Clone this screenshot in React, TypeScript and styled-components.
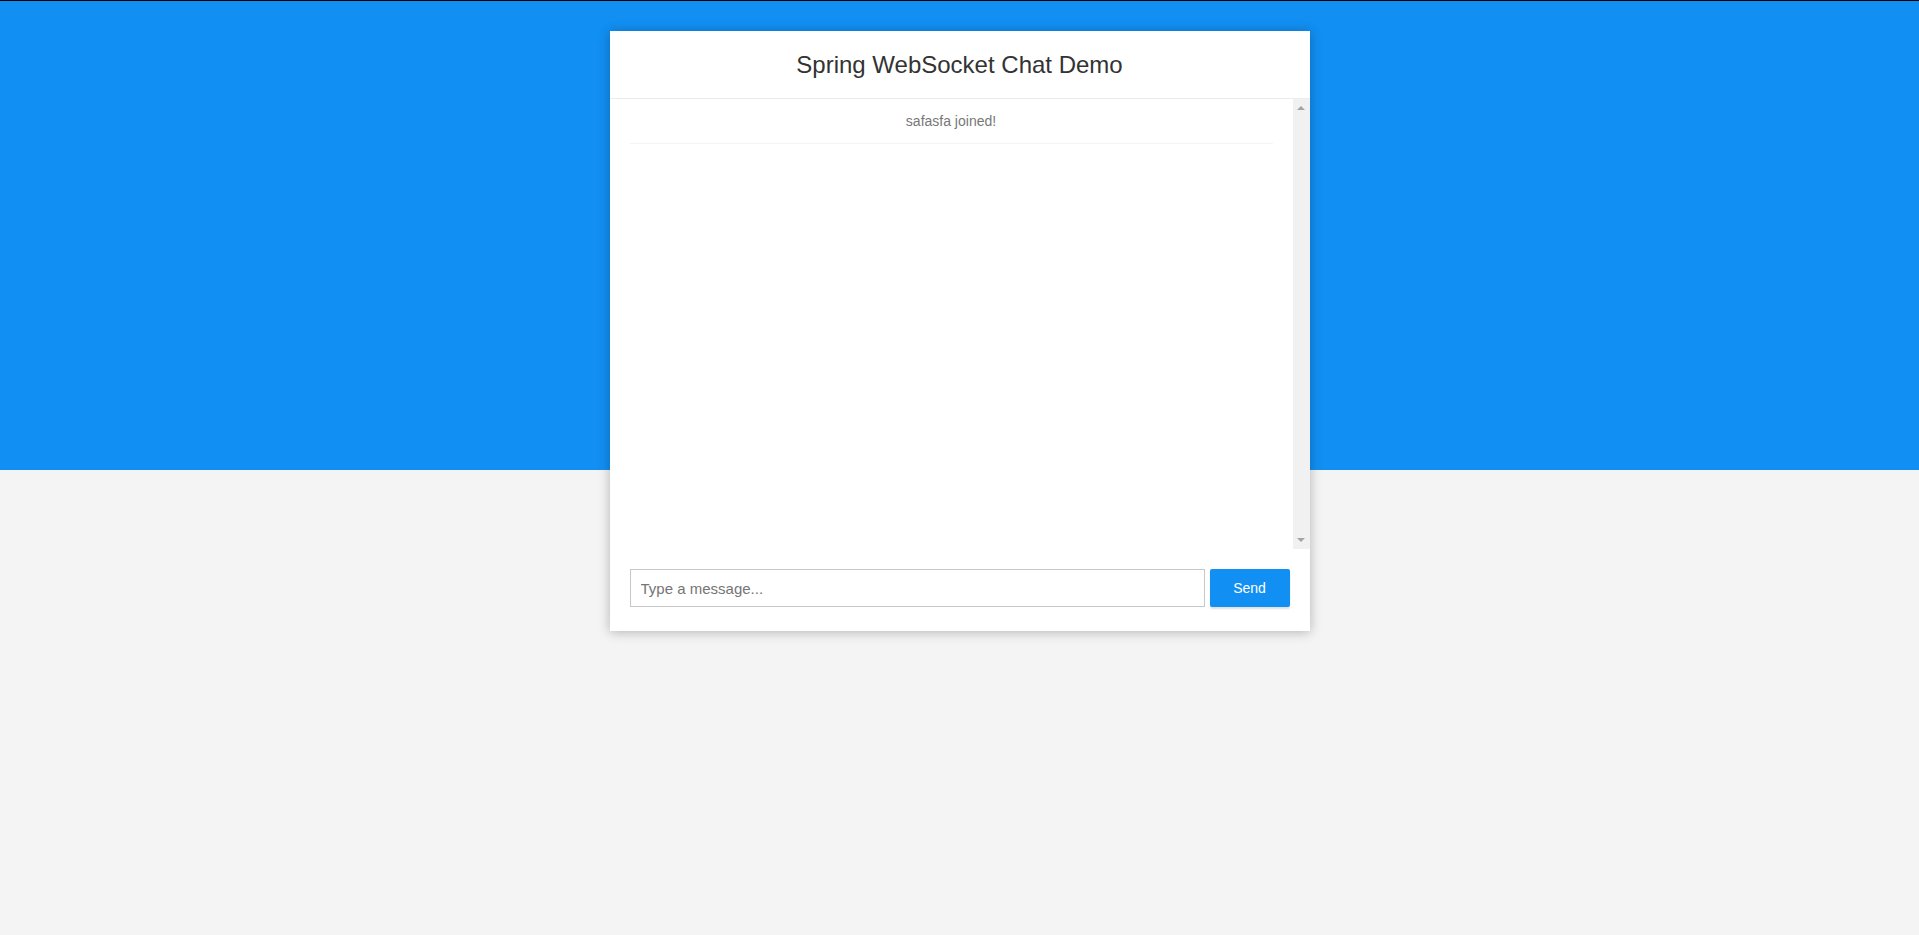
import React from "react";
import styled, { createGlobalStyle } from "styled-components";

const GlobalStyle = createGlobalStyle`
  html, body, #root {
    height: 100%;
    margin: 0;
    padding: 0;
    overflow: hidden;
  }
  body {
    font-family: "Liberation Sans", Arial, Helvetica, sans-serif;
    font-size: 16px;
    font-weight: 400;
    line-height: 1.58;
    color: #333;
    background-color: #f4f4f4;
  }
  * { box-sizing: border-box; }
`;

const Page = styled.div`
  height: 100%;
  padding-top: 31px;
  background: linear-gradient(to bottom, #128ff2 0, #128ff2 470px, #f4f4f4 470px, #f4f4f4 100%);
  box-shadow: inset 0 1px 0 #000;
`;

const ChatCard = styled.div`
  max-width: 700px;
  height: 600px;
  margin: 0 auto;
  background: #fff;
  box-shadow: 0 1px 11px rgba(0, 0, 0, 0.27);
  display: flex;
  flex-direction: column;
  overflow: hidden;
`;

const Header = styled.div`
  text-align: center;
  padding: 15px;
  border-bottom: 1px solid #ececec;
`;

const Title = styled.h2`
  margin: 0;
  font-size: 24px;
  font-weight: 500;
  line-height: 37px;
  color: #333;
`;

const MessageArea = styled.div`
  height: 450px;
  display: flex;
  flex-direction: row;
  flex-shrink: 0;
`;

const MessageList = styled.ul`
  list-style: none;
  margin: 0;
  padding: 0 20px;
  flex: 1;
  overflow: hidden;
`;

const EventItem = styled.li`
  line-height: 24px;
  padding: 10px 20px;
  margin: 0;
  border-bottom: 1px solid #f4f4f4;
  text-align: center;
`;

const EventText = styled.p`
  margin: 0;
  color: #777;
  font-size: 14px;
`;

const ScrollTrack = styled.div`
  width: 17px;
  background: #f1f1f1;
  display: flex;
  flex-direction: column;
  justify-content: space-between;
  align-items: center;
  padding: 7px 0;
`;

const Arrow = styled.span<{ $dir: "up" | "down" }>`
  width: 0;
  height: 0;
  border-left: 4px solid transparent;
  border-right: 4px solid transparent;
  ${(p) =>
    p.$dir === "up"
      ? "border-bottom: 4px solid #a3a3a3;"
      : "border-top: 4px solid #a3a3a3;"}
`;

const MessageForm = styled.form`
  padding: 20px;
  margin: 0;
`;

const InputGroup = styled.div`
  display: flex;
  gap: 5px;
`;

const MessageInput = styled.input`
  width: calc(100% - 85px);
  height: 38px;
  font-size: 15px;
  font-family: "Liberation Sans", Arial, sans-serif;
  border: 1px solid #c8c8c8;
  padding: 1px 2px 1px 10px;
  outline: none;
  color: #333;
  &::placeholder {
    color: #757575;
  }
`;

const SendButton = styled.button`
  width: 80px;
  height: 38px;
  background-color: #128ff2;
  color: #fff;
  border: 1px solid transparent;
  border-radius: 2px;
  box-shadow: 0 2px 2px 0 rgba(0, 0, 0, 0.12);
  font-size: 14px;
  font-family: "Liberation Sans", Arial, sans-serif;
  line-height: 100%;
  padding: 0.6rem 1rem;
  cursor: pointer;
`;

export default function App() {
  return (
    <>
      <GlobalStyle />
      <Page>
        <ChatCard>
          <Header>
            <Title>Spring WebSocket Chat Demo</Title>
          </Header>
          <MessageArea>
            <MessageList>
              <EventItem>
                <EventText>safasfa joined!</EventText>
              </EventItem>
            </MessageList>
            <ScrollTrack>
              <Arrow $dir="up" />
              <Arrow $dir="down" />
            </ScrollTrack>
          </MessageArea>
          <MessageForm onSubmit={(e) => e.preventDefault()}>
            <InputGroup>
              <MessageInput type="text" placeholder="Type a message..." autoComplete="off" />
              <SendButton type="submit">Send</SendButton>
            </InputGroup>
          </MessageForm>
        </ChatCard>
      </Page>
    </>
  );
}
